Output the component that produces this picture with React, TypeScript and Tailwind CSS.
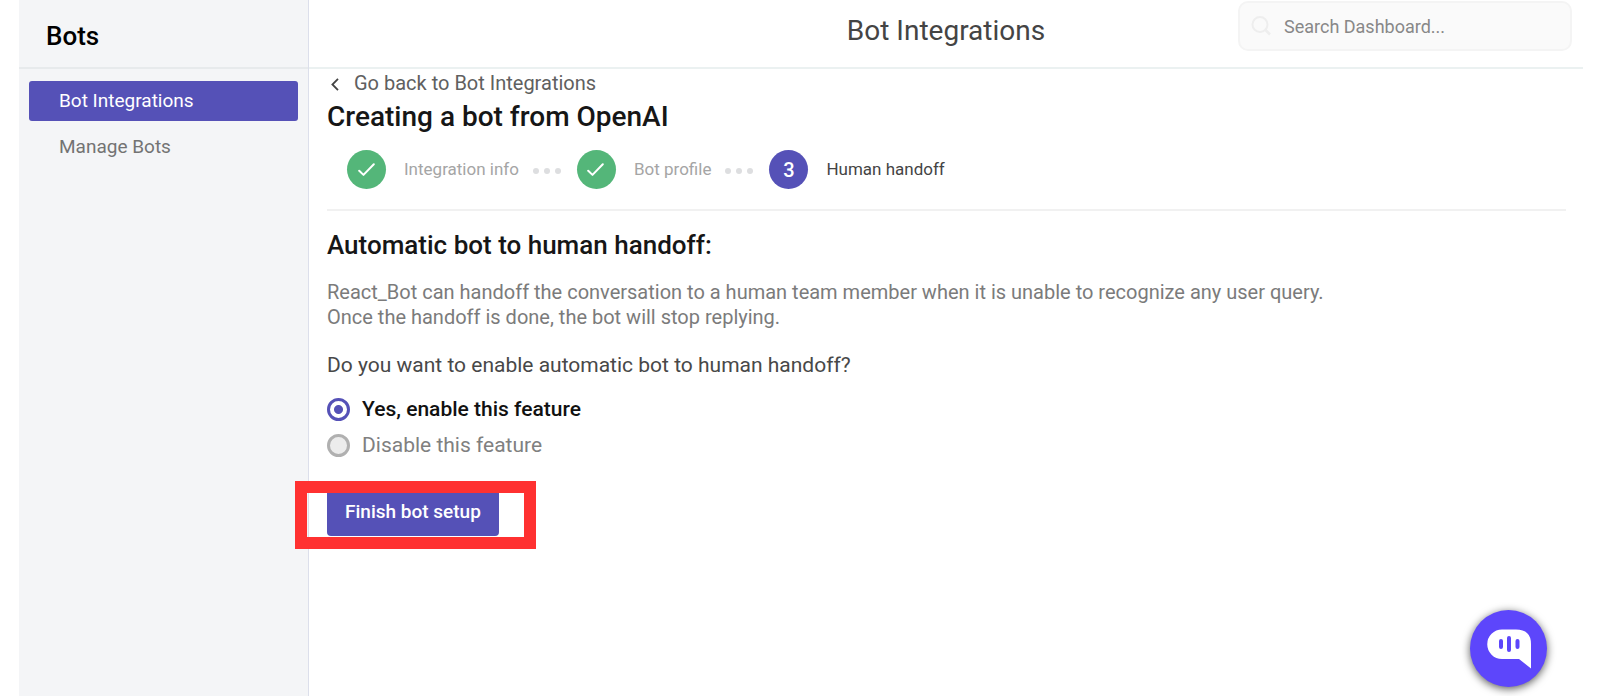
import { useState } from "react";

const steps = [
  { label: "Integration info", done: true },
  { label: "Bot profile", done: true },
  { label: "Human handoff", done: false },
];

function CheckIcon() {
  return (
    <svg viewBox="0 0 18 14" className="h-[14px] w-[18px]" fill="none" stroke="white" strokeWidth="2" strokeLinecap="round" strokeLinejoin="round" aria-hidden="true">
      <path d="M1.2 7.7 L5.5 11.9 L15.8 1.2" />
    </svg>
  );
}

function Sidebar() {
  return (
    <aside className="flex w-[290px] shrink-0 flex-col border-r border-[#dcdfeb] bg-[#f4f5f7]">
      <h2 className="flex h-[69px] items-center border-b-2 border-[#e7eaec] pt-[6px] pl-[27px] text-[26px] font-medium text-black">Bots</h2>
      <nav className="flex flex-col gap-[6px] px-[10px] pt-3 text-[19px]">
        <a href="#integrations" className="flex h-10 items-center rounded-[3px] bg-[#5551b7] pl-[30px] text-white">
          Bot Integrations
        </a>
        <a href="#manage" className="flex h-10 items-center pl-[30px] text-[#737373]">
          Manage Bots
        </a>
      </nav>
    </aside>
  );
}

function Header() {
  return (
    <header className="grid h-[69px] grid-cols-[1fr_auto_1fr] border-b-2 border-[#ebf1f1]">
      <h1 className="col-start-2 pt-[11px] text-[28px] leading-10 text-[#444]">Bot Integrations</h1>
      <label className="mt-px mr-[11px] flex h-[50px] w-[334px] items-center gap-[13px] justify-self-end rounded-[10px] border-2 border-[#f4f4f4] bg-[#fafafa] pl-[11px]">
        <svg viewBox="0 0 20 20" className="h-5 w-5 shrink-0" fill="none" stroke="#eeeeee" strokeWidth="2" aria-hidden="true">
          <circle cx="9" cy="8.5" r="7.5" />
          <path d="M14 13.5 L19 18.5" strokeWidth="2.6" />
        </svg>
        <input type="search" aria-label="Search Dashboard" placeholder="Search Dashboard..." className="min-w-0 flex-1 bg-transparent text-[18px] text-[#444] outline-none placeholder:text-[#888]" />
      </label>
    </header>
  );
}

function Stepper() {
  return (
    <ol className="flex items-center border-b-2 border-[#f1f1f1] pb-5 pl-5 text-[17px]">
      {steps.map((step, index) => (
        <li key={step.label} className="flex items-center">
          <span className={step.done ? "flex size-[39px] items-center justify-center rounded-full bg-[#54b679]" : "flex size-[39px] items-center justify-center rounded-full bg-[#5551b7] text-[20px] font-medium text-white"}>
            {step.done ? <CheckIcon /> : index + 1}
          </span>
          <span className={step.done ? "ml-[18px] text-[#a5a5a5]" : "ml-[18px] text-[#444]"}>{step.label}</span>
          {step.done && (
            <span className="mr-4 ml-[14px] flex gap-[5px] pt-[2px]" aria-hidden="true">
              <i className="size-[6px] rounded-full bg-[#dddee0]" />
              <i className="size-[6px] rounded-full bg-[#dddee0]" />
              <i className="size-[6px] rounded-full bg-[#dddee0]" />
            </span>
          )}
        </li>
      ))}
    </ol>
  );
}

const radioClass =
  "size-[23px] shrink-0 appearance-none rounded-full border-[3px] border-[#b0b0b0] bg-[#ececec] checked:border-[#5551b7] checked:bg-[radial-gradient(circle,#5551b7_4px,white_5px)]";

export default function App() {
  const [enabled, setEnabled] = useState(true);

  return (
    <div className="flex min-h-screen bg-white pr-[17px] pl-[19px] font-['Roboto',sans-serif]">
      <Sidebar />
      <div className="flex min-w-0 flex-1 flex-col">
        <Header />
        <main className="pr-[17px] pl-[18px]">
          <a href="#integrations" className="flex h-7 items-center gap-[15px] pl-1 text-[20px] text-[#606060]">
            <svg viewBox="0 0 8 13" className="mt-[3px] h-[13px] w-2" fill="none" stroke="#444" strokeWidth="1.8" aria-hidden="true">
              <path d="M7 0.8 L1.4 6.5 L7 12.2" />
            </svg>
            Go back to Bot Integrations
          </a>
          <h2 className="mb-[13px] text-[28px] leading-10 font-medium text-[#161616]">Creating a bot from OpenAI</h2>
          <Stepper />
          <h3 className="mt-[18px] text-[26px] leading-8 font-medium text-[#161616]">Automatic bot to human handoff:</h3>
          <p className="mt-[19px] text-[20px] leading-[25px] text-[#7b7b7b]">
            React_Bot can handoff the conversation to a human team member when it is unable to recognize any user query.
            <br />
            Once the handoff is done, the bot will stop replying.
          </p>
          <fieldset className="mt-[22px]">
            <legend className="text-[21px] leading-[26px] text-[#484848]">Do you want to enable automatic bot to human handoff?</legend>
            <div className="mt-[13px] flex flex-col items-start text-[21px] leading-[34px]">
              <label className="flex h-9 items-center gap-3 font-medium text-[#111]">
                <input type="radio" name="handoff" checked={enabled} onChange={() => setEnabled(true)} className={radioClass} />
                Yes, enable this feature
              </label>
              <label className="flex h-9 items-center gap-3 text-[#808080]">
                <input type="radio" name="handoff" checked={!enabled} onChange={() => setEnabled(false)} className={radioClass} />
                Disable this feature
              </label>
            </div>
          </fieldset>
          <div className="relative mt-[25px] w-fit">
            <button type="button" className="h-12 rounded-[4px] bg-[#5551b7] px-[18px] text-[19px] font-medium text-white">
              Finish bot setup
            </button>
            <div className="pointer-events-none absolute top-[-7px] right-[-37px] bottom-[-13px] left-[-32px] border-12 border-[#ff3131]" />
          </div>
        </main>
      </div>
      <button type="button" aria-label="Open chat" className="fixed right-[53px] bottom-[9px] flex size-[77px] items-center justify-center rounded-full bg-[#5d46fb] shadow-[0_2px_8px_rgba(0,0,0,0.65)]">
        <svg viewBox="0 0 44 40" className="h-10 w-11" aria-hidden="true">
          <path d="M15 0.5 H29 Q44 0.5 44 15 V39.5 L32 30 H15 A14.75 14.75 0 0 1 15 0.5 Z" fill="white" />
          <path d="M14 12 V18 M22 9 V21 M30.500 12 V18" stroke="#5d46fb" strokeWidth="4" strokeLinecap="round" />
        </svg>
      </button>
    </div>
  );
}
